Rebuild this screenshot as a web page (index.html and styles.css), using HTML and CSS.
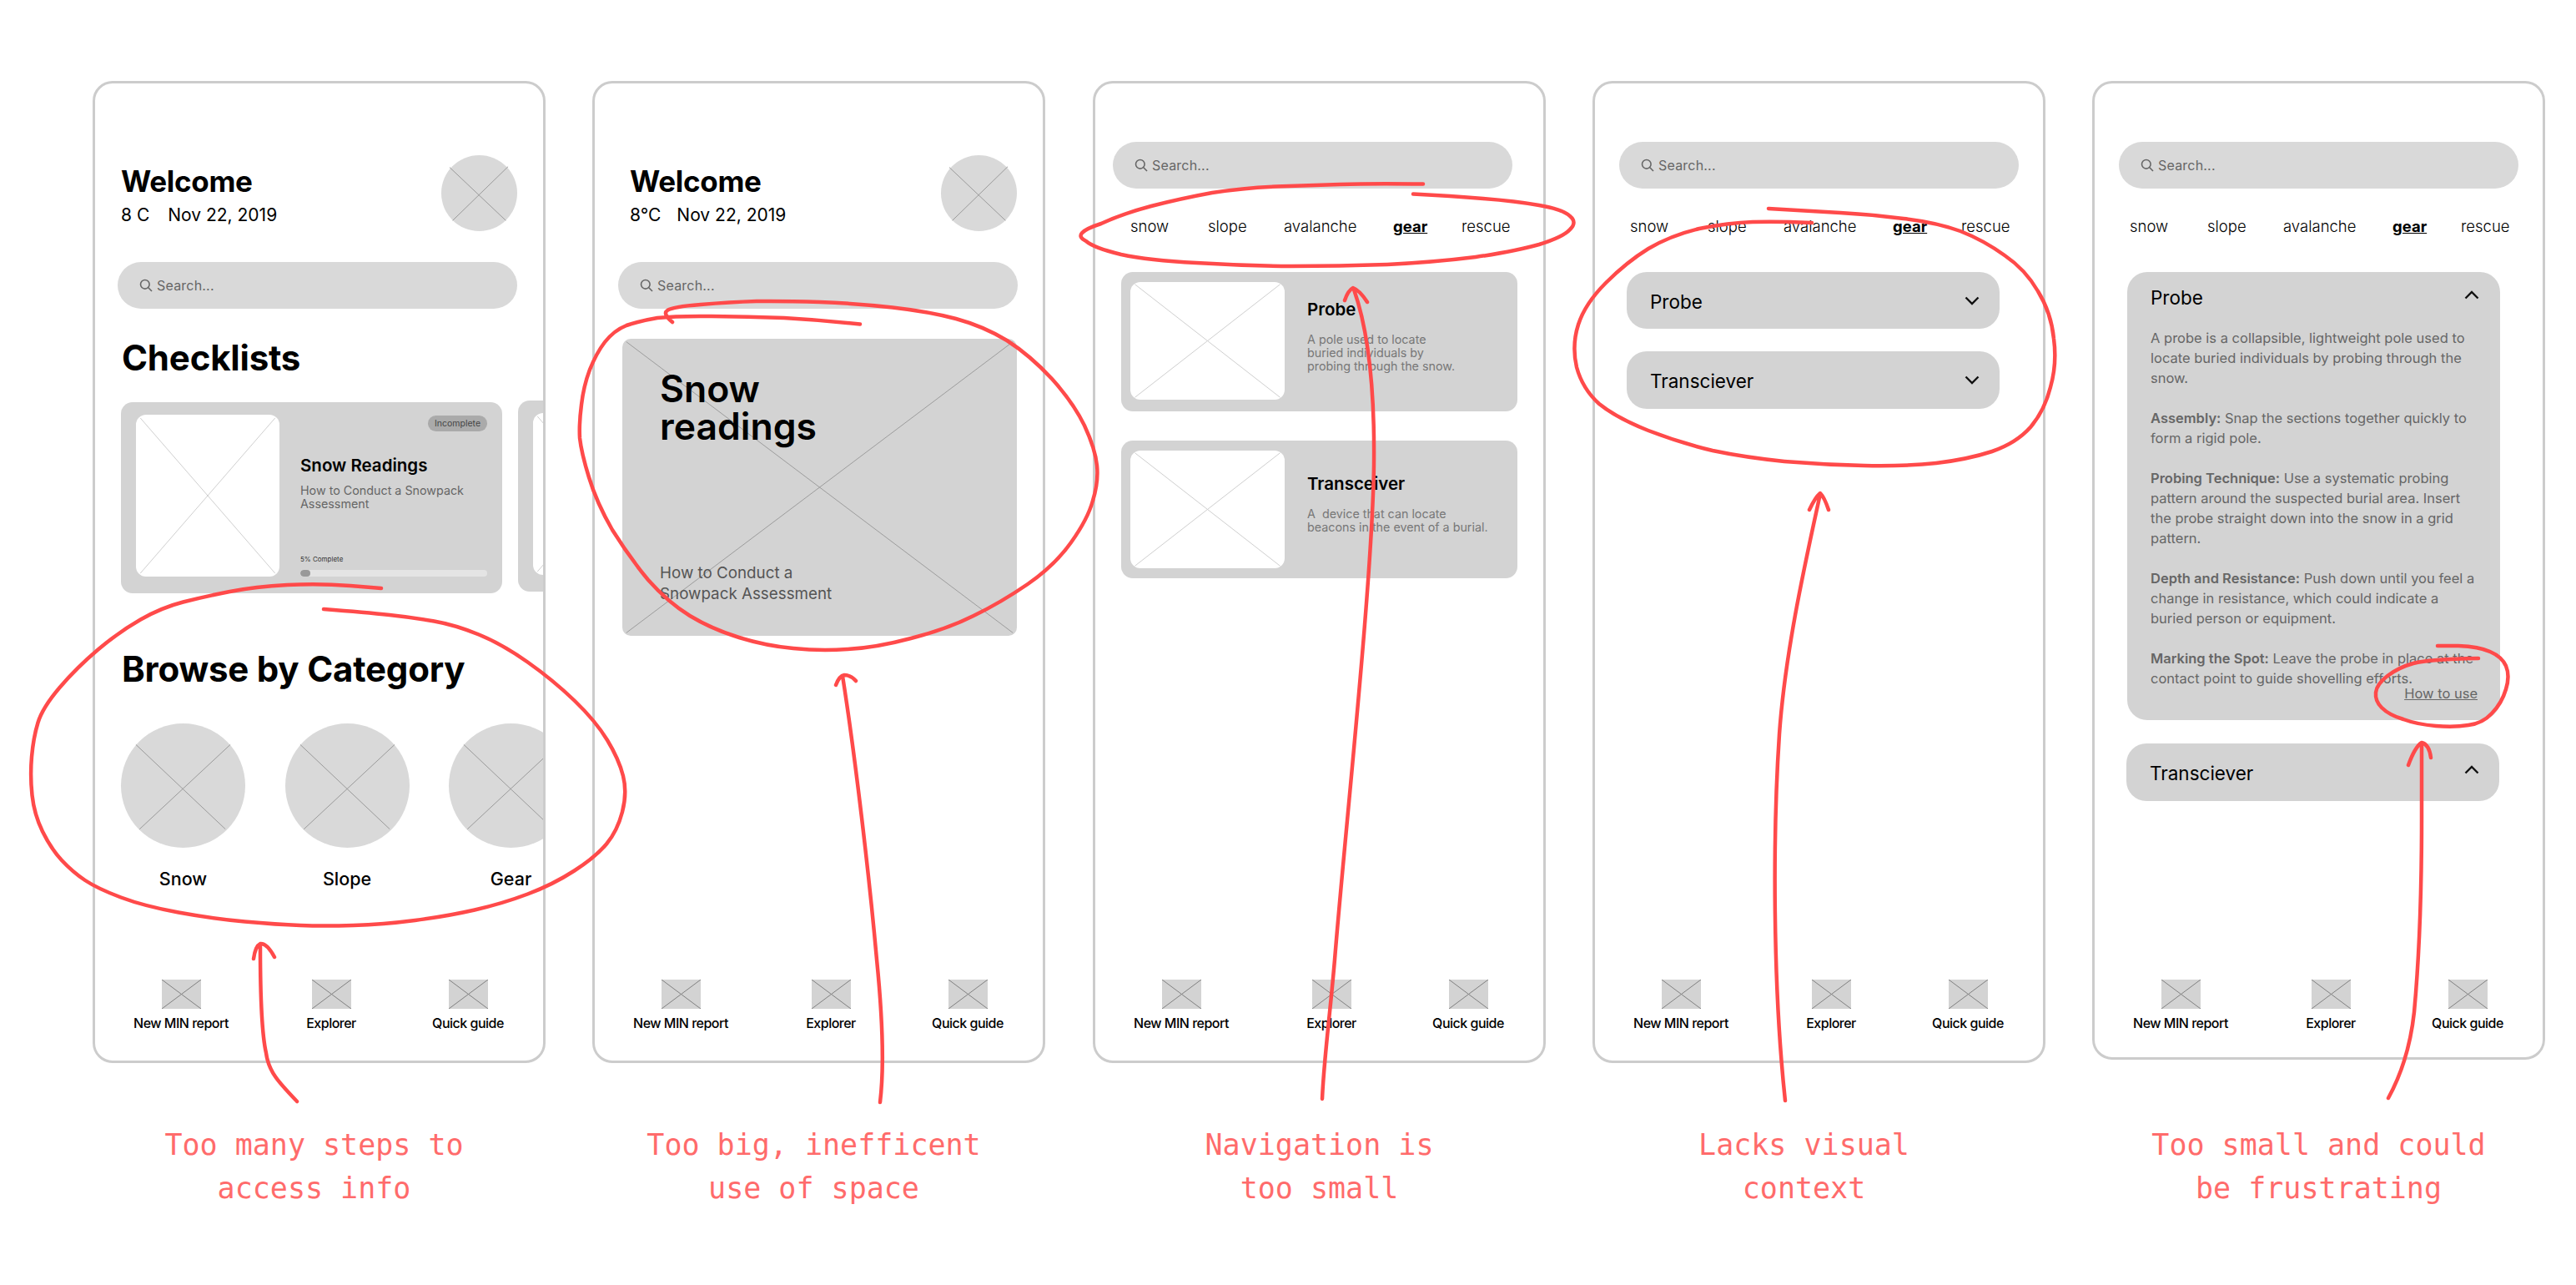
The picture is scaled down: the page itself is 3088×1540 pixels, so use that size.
FILE: index.html
```html
<!DOCTYPE html>
<html lang="en">
<head>
<meta charset="utf-8">
<title>Wireframe critique</title>
<link rel="stylesheet" href="styles.css">
</head>
<body>
<main class="board">

  <section class="col">
    <div class="panel">
      <div class="header hdr-a">
        <div class="greet">
          <h1 class="welcome">Welcome</h1>
          <p class="date"><span>8 C</span><span>Nov 22, 2019</span></p>
        </div>
        <div class="avatar"><svg class="x x-round"><line x1="11%" y1="16%" x2="85%" y2="86%"/><line x1="88%" y1="15%" x2="15%" y2="86%"/></svg></div>
      </div>
      <div class="search search-a"><svg class="search-icon" viewBox="0 0 16 16"><circle cx="6.8" cy="6.8" r="5.3"/><line x1="10.8" y1="10.8" x2="15" y2="15"/></svg><span>Search...</span></div>
      <h2 class="heading heading-check">Checklists</h2>
      <div class="card-row">
        <article class="check-card">
          <div class="thumb thumb-check"><svg class="x x-light"><line x1="3%" y1="2%" x2="97%" y2="98%"/><line x1="97%" y1="2%" x2="3%" y2="98%"/></svg></div>
          <div class="check-body">
            <span class="badge">Incomplete</span>
            <h3 class="check-title">Snow Readings</h3>
            <p class="check-desc">How to Conduct a Snowpack Assessment</p>
            <div class="progress-group">
              <p class="percent">5% Complete</p>
              <div class="track"><div class="bar"></div></div>
            </div>
          </div>
        </article>
        <article class="check-card peek">
          <div class="thumb thumb-check"><svg class="x x-light"><line x1="3%" y1="2%" x2="97%" y2="98%"/><line x1="97%" y1="2%" x2="3%" y2="98%"/></svg></div>
        </article>
      </div>
      <h2 class="heading heading-browse">Browse by Category</h2>
      <div class="cat-row">
        <div class="cat"><div class="cat-img"><svg class="x x-round"><line x1="12%" y1="17%" x2="84%" y2="85%"/><line x1="88%" y1="17%" x2="15%" y2="85%"/></svg></div><p class="cat-label">Snow</p></div>
        <div class="cat"><div class="cat-img"><svg class="x x-round"><line x1="12%" y1="17%" x2="84%" y2="85%"/><line x1="88%" y1="17%" x2="15%" y2="85%"/></svg></div><p class="cat-label">Slope</p></div>
        <div class="cat"><div class="cat-img"><svg class="x x-round"><line x1="12%" y1="17%" x2="84%" y2="85%"/><line x1="88%" y1="17%" x2="15%" y2="85%"/></svg></div><p class="cat-label">Gear</p></div>
      </div>
      <nav class="nav">
        <div class="nav-item"><div class="nav-icon"><svg class="x x-dark"><line x1="0" y1="0" x2="100%" y2="100%"/><line x1="100%" y1="0" x2="0" y2="100%"/></svg></div><span>New MIN report</span></div>
        <div class="nav-item"><div class="nav-icon"><svg class="x x-dark"><line x1="0" y1="0" x2="100%" y2="100%"/><line x1="100%" y1="0" x2="0" y2="100%"/></svg></div><span>Explorer</span></div>
        <div class="nav-item"><div class="nav-icon"><svg class="x x-dark"><line x1="0" y1="0" x2="100%" y2="100%"/><line x1="100%" y1="0" x2="0" y2="100%"/></svg></div><span>Quick guide</span></div>
      </nav>
    </div>
    <p class="caption cap-left">Too many steps to<br>access info</p>
  </section>

  <section class="col col-second">
    <div class="panel">
      <div class="header hdr-b">
        <div class="greet">
          <h1 class="welcome">Welcome</h1>
          <p class="date"><span>8°C</span><span>Nov 22, 2019</span></p>
        </div>
        <div class="avatar"><svg class="x x-round"><line x1="11%" y1="16%" x2="85%" y2="86%"/><line x1="88%" y1="15%" x2="15%" y2="86%"/></svg></div>
      </div>
      <div class="search search-b"><svg class="search-icon" viewBox="0 0 16 16"><circle cx="6.8" cy="6.8" r="5.3"/><line x1="10.8" y1="10.8" x2="15" y2="15"/></svg><span>Search...</span></div>
      <article class="hero">
        <svg class="x x-hero"><line x1="1%" y1="1%" x2="99%" y2="99%"/><line x1="99%" y1="1%" x2="1%" y2="99%"/></svg>
        <h2 class="hero-title">Snow<br>readings</h2>
        <p class="hero-desc">How to Conduct a<br>Snowpack Assessment</p>
      </article>
      <nav class="nav">
        <div class="nav-item"><div class="nav-icon"><svg class="x x-dark"><line x1="0" y1="0" x2="100%" y2="100%"/><line x1="100%" y1="0" x2="0" y2="100%"/></svg></div><span>New MIN report</span></div>
        <div class="nav-item"><div class="nav-icon"><svg class="x x-dark"><line x1="0" y1="0" x2="100%" y2="100%"/><line x1="100%" y1="0" x2="0" y2="100%"/></svg></div><span>Explorer</span></div>
        <div class="nav-item"><div class="nav-icon"><svg class="x x-dark"><line x1="0" y1="0" x2="100%" y2="100%"/><line x1="100%" y1="0" x2="0" y2="100%"/></svg></div><span>Quick guide</span></div>
      </nav>
    </div>
    <p class="caption cap-left">Too big, inefficent<br>use of space</p>
  </section>

  <section class="col">
    <div class="panel panel-top">
      <div class="search search-c"><svg class="search-icon" viewBox="0 0 16 16"><circle cx="6.8" cy="6.8" r="5.3"/><line x1="10.8" y1="10.8" x2="15" y2="15"/></svg><span>Search...</span></div>
      <div class="tabs"><span>snow</span><span>slope</span><span>avalanche</span><span class="tab-active">gear</span><span>rescue</span></div>
      <article class="gear-card">
        <div class="thumb thumb-gear"><svg class="x x-light"><line x1="3%" y1="2%" x2="97%" y2="98%"/><line x1="97%" y1="2%" x2="3%" y2="98%"/></svg></div>
        <div class="gear-body">
          <h3 class="check-title">Probe</h3>
          <p class="gear-desc">A pole used to locate<br>buried individuals by<br>probing through the snow.</p>
        </div>
      </article>
      <article class="gear-card gear-card-second">
        <div class="thumb thumb-gear"><svg class="x x-light"><line x1="3%" y1="2%" x2="97%" y2="98%"/><line x1="97%" y1="2%" x2="3%" y2="98%"/></svg></div>
        <div class="gear-body">
          <h3 class="check-title">Transceiver</h3>
          <p class="gear-desc">A&nbsp; device that can locate<br>beacons in the event of a burial.</p>
        </div>
      </article>
      <nav class="nav">
        <div class="nav-item"><div class="nav-icon"><svg class="x x-dark"><line x1="0" y1="0" x2="100%" y2="100%"/><line x1="100%" y1="0" x2="0" y2="100%"/></svg></div><span>New MIN report</span></div>
        <div class="nav-item"><div class="nav-icon"><svg class="x x-dark"><line x1="0" y1="0" x2="100%" y2="100%"/><line x1="100%" y1="0" x2="0" y2="100%"/></svg></div><span>Explorer</span></div>
        <div class="nav-item"><div class="nav-icon"><svg class="x x-dark"><line x1="0" y1="0" x2="100%" y2="100%"/><line x1="100%" y1="0" x2="0" y2="100%"/></svg></div><span>Quick guide</span></div>
      </nav>
    </div>
    <p class="caption">Navigation is<br>too small</p>
  </section>

  <section class="col">
    <div class="panel panel-top">
      <div class="search search-d"><svg class="search-icon" viewBox="0 0 16 16"><circle cx="6.8" cy="6.8" r="5.3"/><line x1="10.8" y1="10.8" x2="15" y2="15"/></svg><span>Search...</span></div>
      <div class="tabs"><span>snow</span><span>slope</span><span>avalanche</span><span class="tab-active">gear</span><span>rescue</span></div>
      <div class="acc acc-first"><span>Probe</span><svg class="chevron" viewBox="0 0 18 11"><polyline points="1.5,1.5 9,9 16.5,1.5"/></svg></div>
      <div class="acc acc-second"><span>Transciever</span><svg class="chevron" viewBox="0 0 18 11"><polyline points="1.5,1.5 9,9 16.5,1.5"/></svg></div>
      <nav class="nav">
        <div class="nav-item"><div class="nav-icon"><svg class="x x-dark"><line x1="0" y1="0" x2="100%" y2="100%"/><line x1="100%" y1="0" x2="0" y2="100%"/></svg></div><span>New MIN report</span></div>
        <div class="nav-item"><div class="nav-icon"><svg class="x x-dark"><line x1="0" y1="0" x2="100%" y2="100%"/><line x1="100%" y1="0" x2="0" y2="100%"/></svg></div><span>Explorer</span></div>
        <div class="nav-item"><div class="nav-icon"><svg class="x x-dark"><line x1="0" y1="0" x2="100%" y2="100%"/><line x1="100%" y1="0" x2="0" y2="100%"/></svg></div><span>Quick guide</span></div>
      </nav>
    </div>
    <p class="caption cap-far">Lacks visual<br>context</p>
  </section>

  <section class="col">
    <div class="panel panel-top panel-short">
      <div class="search search-d"><svg class="search-icon" viewBox="0 0 16 16"><circle cx="6.8" cy="6.8" r="5.3"/><line x1="10.8" y1="10.8" x2="15" y2="15"/></svg><span>Search...</span></div>
      <div class="tabs"><span>snow</span><span>slope</span><span>avalanche</span><span class="tab-active">gear</span><span>rescue</span></div>
      <div class="open-acc">
        <div class="open-head"><span>Probe</span><svg class="chevron chevron-up" viewBox="0 0 18 11"><polyline points="1.5,9.5 9,2 16.5,9.5"/></svg></div>
        <div class="open-body">
          <p>A probe is a collapsible, lightweight pole used to<br>locate buried individuals by probing through the<br>snow.</p>
          <p><b>Assembly:</b> Snap the sections together quickly to<br>form a rigid pole.</p>
          <p><b>Probing Technique:</b> Use a systematic probing<br>pattern around the suspected burial area. Insert<br>the probe straight down into the snow in a grid<br>pattern.</p>
          <p><b>Depth and Resistance:</b> Push down until you feel a<br>change in resistance, which could indicate a<br>buried person or equipment.</p>
          <p><b>Marking the Spot:</b> Leave the probe in place at the<br>contact point to guide shovelling efforts.</p>
          <a class="how-to">How to use</a>
        </div>
      </div>
      <div class="acc acc-closed"><span>Transciever</span><svg class="chevron chevron-up" viewBox="0 0 18 11"><polyline points="1.5,9.5 9,2 16.5,9.5"/></svg></div>
      <nav class="nav nav-short">
        <div class="nav-item"><div class="nav-icon"><svg class="x x-dark"><line x1="0" y1="0" x2="100%" y2="100%"/><line x1="100%" y1="0" x2="0" y2="100%"/></svg></div><span>New MIN report</span></div>
        <div class="nav-item"><div class="nav-icon"><svg class="x x-dark"><line x1="0" y1="0" x2="100%" y2="100%"/><line x1="100%" y1="0" x2="0" y2="100%"/></svg></div><span>Explorer</span></div>
        <div class="nav-item"><div class="nav-icon"><svg class="x x-dark"><line x1="0" y1="0" x2="100%" y2="100%"/><line x1="100%" y1="0" x2="0" y2="100%"/></svg></div><span>Quick guide</span></div>
      </nav>
    </div>
    <p class="caption caption-short">Too small and could<br>be frustrating</p>
  </section>

  <svg class="markup" viewBox="0 0 3088 1540">
    <path d="M457 705 L420 702 Q383 699 344.5 701 Q306 703 275.5 709 Q245 715 219.5 721.5 Q194 728 168.5 742.5 Q143 757 117.5 778.5 Q92 800 71.5 824 Q51 848 45.5 866 Q40 884 38 907 Q36 930 38.5 953 Q41 976 51 996.5 Q61 1017 74 1031 Q87 1045 102 1055 Q117 1065 145 1075.5 Q173 1086 214 1093.5 Q255 1101 293.5 1104.5 Q332 1108 360 1109 Q388 1110 423.5 1109 Q459 1108 497.5 1103 Q536 1098 569 1090.5 Q602 1083 632.5 1071.5 Q663 1060 688.5 1043.5 Q714 1027 727 1011.5 Q740 996 746 973 Q752 950 747 930 Q742 910 728 887 Q714 864 688.5 839.5 Q663 815 632.5 793.5 Q602 772 574 760.5 Q546 749 520.5 744.5 Q495 740 467 737 Q439 734 388 730"/>
    <path d="M304 1149 Q306 1134 312 1131 Q320 1130 329 1147 M312 1135 C312 1190 314 1240 319 1262 C322 1285 335 1298 356 1320"/>
    <path d="M806 386 Q794 376 800 372 Q806 367.6 840 365 Q875 362 907 361 Q940 360.6 983 362 Q1027 363.6 1070 368.5 Q1114 373.5 1146 382 Q1179 391 1207 408 Q1235 426 1261 454 Q1287 483 1300 510 Q1313 538 1315 558 Q1317 577.5 1310 600 Q1304 622 1284 650 Q1265 677 1232 700 Q1200 722 1167 738 Q1135 754 1092 765 Q1049 776.5 1016 778 Q984 780.5 951 777 Q918.5 774 886 764 Q853.5 754 827 738 Q801 722 777 695 Q754 667 734 635 Q715 602 706 572 Q697 543 695 525 Q694 508 697 485 Q699.5 463 707 443 Q715 423 725 410 Q736 396 751 390 Q767 384.5 788 381 Q810 378.5 853 379 Q897 379.5 940 381 Q984 383.5 1031 388.5"/>
    <path d="M1002 821 Q1006 810 1012 809 Q1020 809 1026 816 M1010 810 C1025 905 1042 1050 1051 1150 C1058 1220 1060 1280 1055 1321"/>
    <path d="M1706 220.5 Q1644 219.6 1606 221 Q1568 222 1530 223.5 Q1491 225 1453 231 Q1415 238 1380 247 Q1346 256 1320 268 Q1283 280 1302 289 Q1311 297 1344 305 Q1376.5 312 1434 315 Q1491 318.5 1548 319 Q1606 319 1663 317 Q1721 314 1769 308 Q1817 301 1845 293 Q1874 284 1882 275 Q1891 266.5 1882 259 Q1874 251 1845 246 Q1817 241 1778 238 Q1740 235 1694 232.6"/>
    <path d="M1612 360 Q1616 348 1622 345 Q1630 348 1639 362 M1623 347 C1640 395 1648 470 1647 557 C1645 700 1612 1000 1600 1150 C1594 1220 1587 1270 1585 1317"/>
    <path d="M2172 267 Q2130 265 2101 266 Q2072 267 2037 274 Q2003 282 1976 298 Q1950 314 1925 339 Q1900 364 1892 389 Q1884 414 1890 440 Q1897 466 1917 484 Q1938 501 1976 516 Q2015 531 2053 540 Q2091 548 2139 553 Q2187 557 2235 558 Q2283 559 2321 555 Q2359 550.5 2388 541 Q2417 531 2434 512 Q2451 492 2458 464 Q2466 436 2462 406 Q2459 375 2443 349 Q2428 323 2403 306 Q2378 288 2350 277 Q2321 266.5 2282 262 Q2244 257 2206 255 Q2168 252.6 2120 250"/>
    <path d="M2169 611 Q2176 596 2182 591 Q2187 596 2192 611 M2182 592 C2165 670 2140 780 2133 880 C2125 1000 2125 1180 2140 1319"/>
    <path d="M2971 789 Q2912 790 2893 795 Q2875 800 2862 810 Q2849 820 2848 830 Q2847 840 2855 848 Q2864 857 2881 862 Q2897 868 2920 870 Q2942 872 2959 869 Q2976 867 2987 855 Q2999 843 3004 826 Q3009 810 3004 798 Q2999 787 2985 781 Q2972 775 2947 774 Q2940 774 2922 774"/>
    <path d="M2887 917 Q2895 895 2903 890 Q2912 892 2914 908 M2903 892 L2903 980 C2903 1090 2898 1170 2894 1213 C2890 1250 2880 1285 2863 1316"/>
  </svg>
</main>
</body>
</html>
```

FILE: styles.css
```css
* { box-sizing: border-box; }
html, body { margin: 0; padding: 0; background: #fff; }
body { overflow: hidden; font-family: Inter, "Liberation Sans", sans-serif; color: #000; }
h1, h2, h3, p { margin: 0; }

.board {
  position: relative;
  width: 3088px;
  height: 1540px;
  display: flex;
  gap: 56px;
  padding: 97px 0 0 111px;
}
.col { width: 543px; flex: none; display: flex; flex-direction: column; }
.col-second { margin-right: 1px; }

.panel {
  height: 1177px;
  border: 3px solid #ccc;
  border-radius: 24px;
  overflow: hidden;
  display: flex;
  flex-direction: column;
  background: #fff;
}
.panel-top { padding-top: 70px; }
.panel-short { height: 1173px; }

.caption {
  margin-top: 72px;
  font: 400 35px/52px "DejaVu Sans Mono", "Liberation Mono", monospace;
  color: #ff6b6b;
  text-align: center;
}
.caption-short { margin-top: 76px; }
.cap-left { padding-right: 12px; }
.cap-far { padding-right: 36px; }

/* placeholder crosses */
.x { position: absolute; inset: 0; width: 100%; height: 100%; }
.x line { stroke-width: 1; }
.x-round line { stroke: #9a9a9a; }
.x-light line { stroke: #cfcfcf; }
.x-dark line { stroke: #808080; }
.x-hero line { stroke: #9c9c9c; }

/* greeting */
.header { display: flex; justify-content: space-between; padding-top: 86px; padding-right: 31px; }
.hdr-a { padding-left: 31px; }
.hdr-b { padding-left: 42px; }
.greet { padding-top: 9px; }
.welcome { font-size: 35px; line-height: 44px; font-weight: 700; letter-spacing: -0.3px; }
.date { display: flex; gap: 22px; margin-top: 5px; font-size: 21px; line-height: 28px; font-weight: 400; }
.hdr-b .date { gap: 19px; }
.avatar { position: relative; width: 91px; height: 91px; border-radius: 50%; background: #d9d9d9; }

/* search */
.search {
  display: flex;
  align-items: center;
  gap: 5px;
  width: 479px;
  height: 56px;
  padding-left: 26px;
  border-radius: 28px;
  background: #d9d9d9;
  color: #666;
  font-size: 16px;
  letter-spacing: 0.2px;
}
.search-a { margin: 37px 0 0 27px; }
.search-b { margin: 37px 0 0 28px; }
.search-c { margin-left: 21px; }
.search-d { margin-left: 29px; }
.search-icon { width: 16px; height: 16px; flex: none; fill: none; stroke: #666; stroke-width: 1.6; }

/* home */
.heading { font-size: 42px; line-height: 50px; font-weight: 700; letter-spacing: -0.2px; margin-left: 32px; }
.heading-check { margin-top: 34px; }
.heading-browse { margin-top: 66px; }
.card-row { display: flex; gap: 19px; margin: 26px 0 0 31px; align-items: flex-start; }
.check-card {
  flex: none;
  display: flex;
  gap: 25px;
  width: 457px;
  height: 229px;
  margin-top: 2px;
  padding: 15px 18px 20px;
  border-radius: 14px;
  background: #d3d3d3;
}
.peek { width: 200px; margin-top: 0; }
.thumb { position: relative; flex: none; background: #fff; border-radius: 12px; }
.thumb-check { width: 172px; height: 194px; }
.check-body { flex: 1; display: flex; flex-direction: column; align-items: flex-start; }
.badge {
  align-self: flex-end;
  width: 71px;
  height: 19px;
  margin-top: 1px;
  border-radius: 10px;
  background: #aaa;
  color: #444;
  font-size: 10.5px;
  line-height: 19px;
  text-align: center;
}
.check-title { font-size: 20.5px; line-height: 24px; font-weight: 600; }
.check-body .check-title { margin-top: 29px; }
.check-desc { margin-top: 10px; width: 215px; font-size: 14.3px; line-height: 16px; color: #666; }
.progress-group { margin-top: auto; width: 100%; }
.percent { font-size: 8px; line-height: 10px; color: #333; margin-bottom: 8px; }
.track { height: 8px; border-radius: 4px; background: #e4e4e4; overflow: hidden; }
.bar { width: 12px; height: 100%; border-radius: 4px; background: #999; }

.cat-row { display: flex; gap: 47.5px; margin: 40px 0 0 31px; }
.cat { flex: none; width: 149px; }
.cat-img { position: relative; width: 149px; height: 149px; border-radius: 50%; background: #d9d9d9; }
.cat-label { margin-top: 23px; font-size: 21.5px; line-height: 28px; font-weight: 500; text-align: center; }

/* bottom nav */
.nav {
  margin-top: auto;
  padding: 0 0 35px 43px;
  display: grid;
  grid-template-columns: 120px 240px 88px;
}
.nav-short { padding-bottom: 31px; }
.nav-item {
  display: flex;
  flex-direction: column;
  align-items: center;
  gap: 7px;
  font-size: 16px;
  line-height: 20px;
  font-weight: 500;
  letter-spacing: -0.5px;
  white-space: nowrap;
}
.nav-icon { position: relative; width: 47px; height: 35px; background: #d3d3d3; }

/* hero */
.hero {
  position: relative;
  width: 473px;
  height: 356px;
  margin: 36px 0 0 33px;
  padding: 38px 0 0 45px;
  border-radius: 10px;
  background: #d3d3d3;
}
.hero-title { position: relative; font-size: 44.5px; line-height: 45px; font-weight: 600; }
.hero-desc { position: relative; margin-top: 140px; font-size: 18.8px; line-height: 25px; color: #555; }

/* tabs */
.tabs {
  display: grid;
  grid-template-columns: 93px 91px 131px 82px 1fr;
  margin-top: 33px;
  padding-left: 42px;
  font-size: 18.5px;
  line-height: 24px;
  font-weight: 300;
}
.tab-active { font-weight: 700; text-decoration: underline; }

/* gear cards */
.gear-card {
  display: flex;
  gap: 27px;
  width: 475px;
  height: 167px;
  margin: 43px 0 0 31px;
  padding: 12px 11px;
  border-radius: 14px;
  background: #d3d3d3;
}
.gear-card-second { height: 165px; margin-top: 35px; }
.thumb-gear { width: 185px; height: 141px; }
.gear-body { display: flex; flex-direction: column; justify-content: center; padding-bottom: 13px; }
.gear-desc { margin-top: 16px; font-size: 14.3px; line-height: 16px; color: #777; white-space: nowrap; }

/* accordions */
.acc {
  display: flex;
  align-items: center;
  justify-content: space-between;
  width: 447px;
  height: 68px;
  padding: 0 24px 0 28px;
  border-radius: 24px;
  background: #d3d3d3;
  font-size: 22.5px;
  font-weight: 400;
}
.acc span { padding-top: 2px; }
.acc-first { margin: 43px 0 0 38px; }
.acc-second { margin: 27px 0 0 38px; height: 69px; }
.acc-closed { margin: 28px 0 0 38px; height: 69px; }
.chevron { width: 18px; height: 11px; flex: none; fill: none; stroke: #111; stroke-width: 2.4; }
.acc-closed .chevron { margin-top: -6px; }

.open-acc {
  width: 447px;
  height: 537px;
  margin: 43px 0 0 39px;
  padding: 17px 25px 0 28px;
  border-radius: 24px;
  background: #d3d3d3;
}
.open-head {
  display: flex;
  justify-content: space-between;
  align-items: flex-start;
  font-size: 22.5px;
  line-height: 28px;
  font-weight: 400;
}
.chevron-up { margin-top: 5px; }
.open-body { margin-top: 22px; display: flex; flex-direction: column; gap: 24px; font-size: 16.5px; line-height: 24px; color: #666; white-space: nowrap; }
.open-body b { font-weight: 600; }
.how-to { align-self: flex-end; margin: -24px 2px 0 0; line-height: 12px; text-decoration: underline; }

/* red pen annotations */
.markup {
  position: absolute;
  inset: 0;
  width: 3088px;
  height: 1540px;
  fill: none;
  stroke: #ff4a4a;
  stroke-width: 4.5;
  stroke-linecap: round;
  stroke-linejoin: round;
  pointer-events: none;
}
```
